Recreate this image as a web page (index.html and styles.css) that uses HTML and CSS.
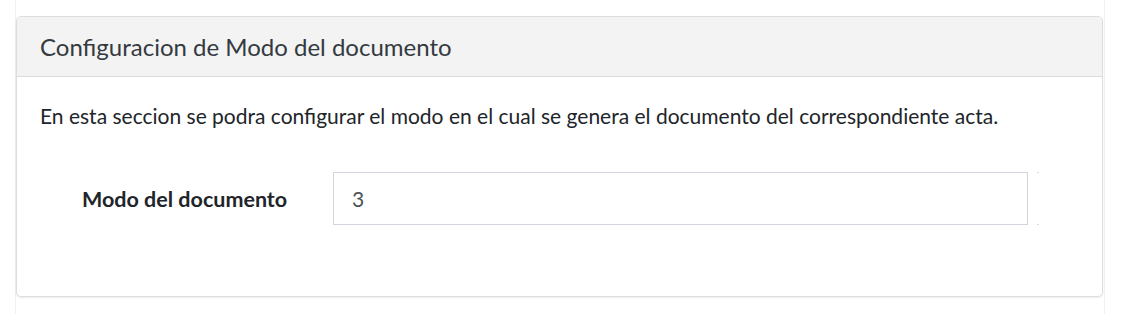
FILE: index.html
```html
<!DOCTYPE html>
<html lang="es">
<head>
<meta charset="utf-8">
<title>Configuracion de Modo del documento</title>
<link rel="stylesheet" href="styles.css">
</head>
<body>
<div class="wrap">
  <section class="card">
    <header class="card-header">
      <h3 class="card-title">Configuracion de Modo del documento</h3>
    </header>
    <div class="card-body">
      <p class="intro">En esta seccion se podra configurar el modo en el cual se genera el documento del correspondiente acta.</p>
      <div class="form-row">
        <label class="field-label" for="modo">Modo del documento</label>
        <input class="field-input" id="modo" type="text" value="3">
        <span class="field-append"></span>
      </div>
    </div>
  </section>
</div>
</body>
</html>
```
FILE: styles.css
```css
* { box-sizing: border-box; }
html, body { margin: 0; padding: 0; background: #ffffff; }
body {
  font-family: "Lato", "Liberation Sans", sans-serif;
  color: #212529;
}
.wrap {
  width: 1090px;
  margin-left: 15px;
  min-height: 314px;
  border-left: 1px solid #f1f1f1;
  border-right: 1px solid #f1f1f1;
  padding: 16px 1px 0 0;
}
.card {
  background: #fff;
  border: 1px solid #dedede;
  border-radius: 5px;
  box-shadow: 0 1px 2px rgba(0,0,0,.08);
  overflow: hidden;
  height: 281px;
}
.card-header {
  height: 60px;
  background: #f3f3f3;
  border-bottom: 1px solid #dcdcdc;
  display: flex;
  align-items: center;
  padding: 0 23px;
}
.card-title {
  margin: 0;
  font-size: 24px;
  font-weight: 400;
  color: #343a40;
  line-height: 1;
}
.card-body {
  padding: 24px 23px 0;
}
.intro {
  margin: 0;
  font-size: 21px;
  line-height: 30px;
  color: #212529;
}
.form-row {
  display: flex;
  align-items: center;
  margin-top: 41px;
  padding-left: 42px;
}
.field-label {
  width: 251px;
  font-size: 21.5px;
  font-weight: 700;
  color: #212529;
}
.field-input {
  width: 695px;
  height: 53px;
  border: 1px solid #d2d4de;
  border-radius: 0;
  padding: 0 18px;
  font-family: inherit;
  font-size: 21px;
  color: #495057;
  background: #fff;
  outline: none;
}
.field-append {
  width: 2px;
  height: 53px;
  margin-left: 9px;
  border-top: 1px solid #d6d6d6;
  border-bottom: 1px solid #d6d6d6;
}
```
